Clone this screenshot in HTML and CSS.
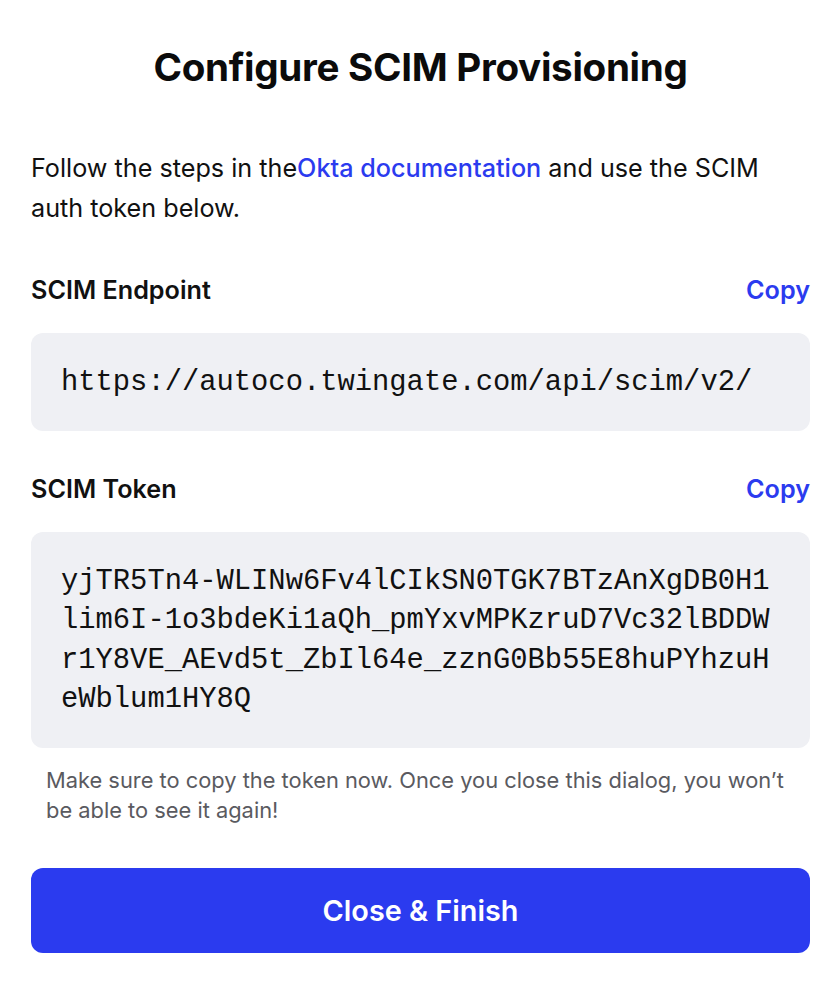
FILE: index.html
```html
<!DOCTYPE html>
<html>
<head>
<meta charset="utf-8">
<link rel="stylesheet" href="styles.css">
</head>
<body>
<div class="dialog">
  <h1 class="title">Configure SCIM Provisioning</h1>
  <p class="intro">Follow the steps in the<a class="link" href="#">Okta documentation</a> and use the SCIM auth token below.</p>

  <div class="field">
    <div class="field-head">
      <span class="label">SCIM Endpoint</span>
      <a class="copy" href="#">Copy</a>
    </div>
    <div class="code">https://autoco.twingate.com/api/scim/v2/</div>
  </div>

  <div class="field">
    <div class="field-head">
      <span class="label">SCIM Token</span>
      <a class="copy" href="#">Copy</a>
    </div>
    <div class="code">yjTR5Tn4-WLINw6Fv4lCIkSN0TGK7BTzAnXgDB0H1lim6I-1o3bdeKi1aQh_pmYxvMPKzruD7Vc32lBDDWr1Y8VE_AEvd5t_ZbIl64e_zznG0Bb55E8huPYhzuHeWblum1HY8Q</div>
    <p class="note">Make sure to copy the token now. Once you close this dialog, you won’t be able to see it again!</p>
  </div>

  <button class="primary">Close &amp; Finish</button>
</div>
</body>
</html>
```
FILE: styles.css
```css
* { box-sizing: border-box; }
html, body { margin: 0; padding: 0; background: #fff; }
body {
  font-family: Inter, "Noto Sans", sans-serif;
  color: #111;
}
.dialog {
  padding: 40px 30px 30px 31px;
  display: flex;
  flex-direction: column;
}
.title {
  margin: 0;
  text-align: center;
  font-size: 38.6px;
  font-weight: 700;
  line-height: 54px;
  letter-spacing: -0.3px;
  color: #0b0b0b;
}
.intro {
  margin: 54px 0 0;
  font-size: 25.2px;
  line-height: 40px;
  color: #111;
}
.link {
  color: #2b3bef;
  text-decoration: none;
  font-weight: 500;
}
.field { margin-top: 47px; }
.field + .field { margin-top: 43px; }
.field-head {
  display: flex;
  justify-content: space-between;
  align-items: center;
  height: 30px;
  margin-bottom: 28px;
}
.label {
  font-size: 25.2px;
  font-weight: 600;
  color: #111;
}
.copy {
  font-size: 25.2px;
  font-weight: 600;
  color: #2b3bef;
  text-decoration: none;
}
.code {
  background: #eff0f4;
  border-radius: 12px;
  padding: 30px 30px 28px;
  font-family: "Liberation Mono", "Courier New", monospace;
  font-size: 28.8px;
  line-height: 39.5px;
  color: #111;
  word-break: break-all;
}
.note {
  margin: 17px 0 0 15px;
  font-size: 21.85px;
  line-height: 30px;
  color: #5a5a5f;
}
.primary {
  margin-top: 43px;
  height: 85px;
  border: none;
  border-radius: 12px;
  background: #2b3bef;
  color: #fff;
  font-family: Inter, "Noto Sans", sans-serif;
  font-size: 28.8px;
  font-weight: 600;
}
```
